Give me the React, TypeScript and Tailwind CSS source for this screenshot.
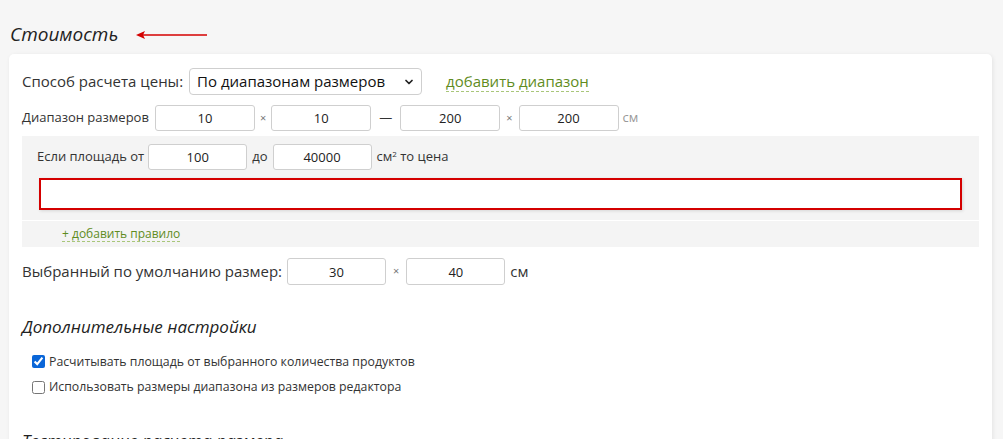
import { ChevronDown } from "lucide-react";

const font = { fontFamily: '"Open Sans", "Noto Sans", sans-serif' };

const Box = ({ value, w = "w-[100px]", h = "h-[26px]" }: { value: string; w?: string; h?: string }) => (
  <input
    readOnly
    value={value}
    className={`${w} ${h} rounded-[3px] border border-[#cfcfcf] bg-white text-center text-[13px] text-[#222] outline-none`}
  />
);

const App = () => {
  return (
    <div className="min-h-screen bg-[#f6f6f6] pl-[9px] pr-[11px] pt-[20px] text-[#333]" style={font}>
      <div className="flex h-[28px] items-center pl-[1px]">
        <h1 className="text-[19px] italic text-[#222]">Стоимость</h1>
        <svg width="72" height="10" viewBox="0 0 72 10" className="ml-[18px] mt-[2px]">
          <path d="M0 5 L9 1 L7 5 L9 9 Z" fill="#d40000" />
          <line x1="6" y1="5" x2="71" y2="5" stroke="#d40000" strokeWidth="1.6" />
        </svg>
      </div>

      <div className="mt-[6px] rounded-[5px] bg-white px-[13px] pb-[60px] pt-[14px] shadow-[1px_1px_4px_rgba(0,0,0,0.08)]">
        <div className="flex h-[27px] items-center">
          <span className="text-[15px] text-[#333]">Способ расчета цены:</span>
          <div className="relative ml-[6px] flex h-[27px] w-[233px] items-center rounded-[4px] border border-[#cfcfcf] pl-[7px]">
            <span className="text-[15px] text-[#111]">По диапазонам размеров</span>
            <ChevronDown className="absolute right-[6px] top-[7px] h-[12px] w-[12px] text-[#222]" strokeWidth={3.5} />
          </div>
          <span className="ml-[24px] border-b border-dashed border-[#a9c67a] text-[15px] leading-[19px] text-[#5f8c1e]">
            добавить диапазон
          </span>
        </div>

        <div className="mt-[10px] flex h-[26px] items-center text-[13px]">
          <span className="text-[#333]">Диапазон размеров</span>
          <div className="ml-[6px]"><Box value="10" /></div>
          <span className="mx-[5px] text-[11px] text-[#777]">×</span>
          <Box value="10" />
          <span className="mx-[8px] text-[#333]">—</span>
          <Box value="200" />
          <span className="mx-[6px] text-[11px] text-[#777]">×</span>
          <Box value="200" />
          <span className="ml-[4px] text-[#999]">см</span>
        </div>

        <div className="mt-[5px] bg-[#f4f4f4] pb-[10px] pt-[8px]">
          <div className="flex h-[26px] items-center pl-[15px] text-[13px]">
            <span className="text-[#333]">Если площадь от</span>
            <div className="ml-[4px]"><Box value="100" w="w-[99px]" /></div>
            <span className="mx-[5px] text-[#333]">до</span>
            <Box value="40000" w="w-[99px]" />
            <span className="ml-[5px] text-[#333]">
              см<sup className="text-[8px]">2</sup> то цена
            </span>
          </div>
          <div className="mx-[17px] mt-[8px] h-[32px] border-[2px] border-[#d40000] bg-white shadow-[1px_1px_3px_rgba(0,0,0,0.12)]" />
        </div>
        <div className="mt-[1px] flex h-[26px] items-center bg-[#f4f4f4] pl-[40px]">
          <span className="border-b border-dashed border-[#a9c67a] text-[12px] leading-[15px] text-[#5f8c1e]">
            + добавить правило
          </span>
        </div>

        <div className="mt-[11px] flex h-[27px] items-center">
          <span className="text-[15px] text-[#333]">Выбранный по умолчанию размер:</span>
          <div className="ml-[5px]"><Box value="30" w="w-[99px]" h="h-[27px]" /></div>
          <span className="mx-[7px] text-[11px] text-[#777]">×</span>
          <Box value="40" w="w-[99px]" h="h-[27px]" />
          <span className="ml-[5px] text-[15px] text-[#333]">см</span>
        </div>

        <h2 className="mt-[29px] text-[17px] italic text-[#222]">Дополнительные настройки</h2>

        <div className="mt-[13px] flex flex-col gap-[7px] pl-[10px] text-[12.3px] text-[#333]">
          <label className="flex items-center gap-[4px]">
            <input type="checkbox" defaultChecked className="h-[13px] w-[13px] accent-[#0a66d8]" />
            <span>Расчитывать площадь от выбранного количества продуктов</span>
          </label>
          <label className="flex items-center gap-[4px]">
            <input type="checkbox" className="h-[13px] w-[13px]" />
            <span>Использовать размеры диапазона из размеров редактора</span>
          </label>
        </div>

        <h2 className="mt-[32px] text-[17px] italic text-[#222]">Тестирование расчета размера</h2>
      </div>
    </div>
  );
};

export default App;
